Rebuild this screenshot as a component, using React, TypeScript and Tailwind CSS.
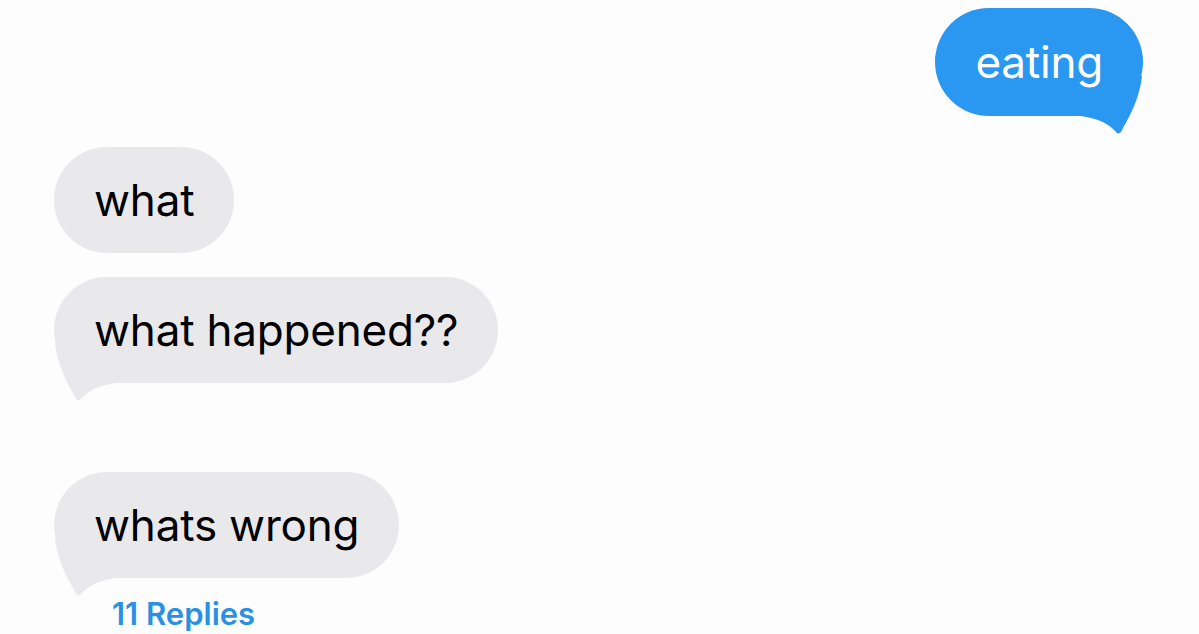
const font = { fontFamily: "Inter, 'Liberation Sans', sans-serif" };

function Tail({ color, flip }: { color: string; flip?: boolean }) {
    return (
        <svg
            width="64"
            height="60"
            viewBox="0 0 64 60"
            className={`pointer-events-none absolute bottom-[-20px] ${flip ? "right-0 -scale-x-100" : "left-0"}`}
        >
            <path
                d="M1 0 C3 18 10 35 20 52 C22 57 24 59 27 56 C33 49 42 43 62 40 L62 0 Z"
                fill={color}
            />
        </svg>
    );
}

function Bubble({ text, mine, tail }: { text: string; mine?: boolean; tail?: boolean }) {
    const bg = mine ? "#2a98f1" : "#e9e9eb";
    return (
        <div className={`relative flex items-center rounded-full px-10 ${mine ? "h-[108px] bg-[#2a98f1] text-white" : "h-[106px] bg-[#e9e9eb] text-black"}`}>
            {tail && <Tail color={bg} flip={mine} />}
            <span className="relative text-[44px] leading-none tracking-[-0.2px]">{text}</span>
        </div>
    );
}

export default function App() {
    return (
        <div className="flex h-[634px] w-[1199px] flex-col overflow-hidden bg-[#fdfdfd]" style={font}>
            <div className="flex justify-end pr-[56px] pt-[8px]">
                <Bubble text="eating" mine tail />
            </div>

            <div className="mt-[31px] flex flex-col items-start pl-[54px]">
                <Bubble text="what" />
                <div className="mt-[24px]">
                    <Bubble text="what happened??" tail />
                </div>
                <div className="mt-[89px]">
                    <Bubble text="whats wrong" tail />
                </div>
                <p className="ml-[58px] mt-[20px] text-[31px] font-semibold leading-none text-[#2b8fe3]">
                    11 Replies
                </p>
            </div>
        </div>
    );
}
